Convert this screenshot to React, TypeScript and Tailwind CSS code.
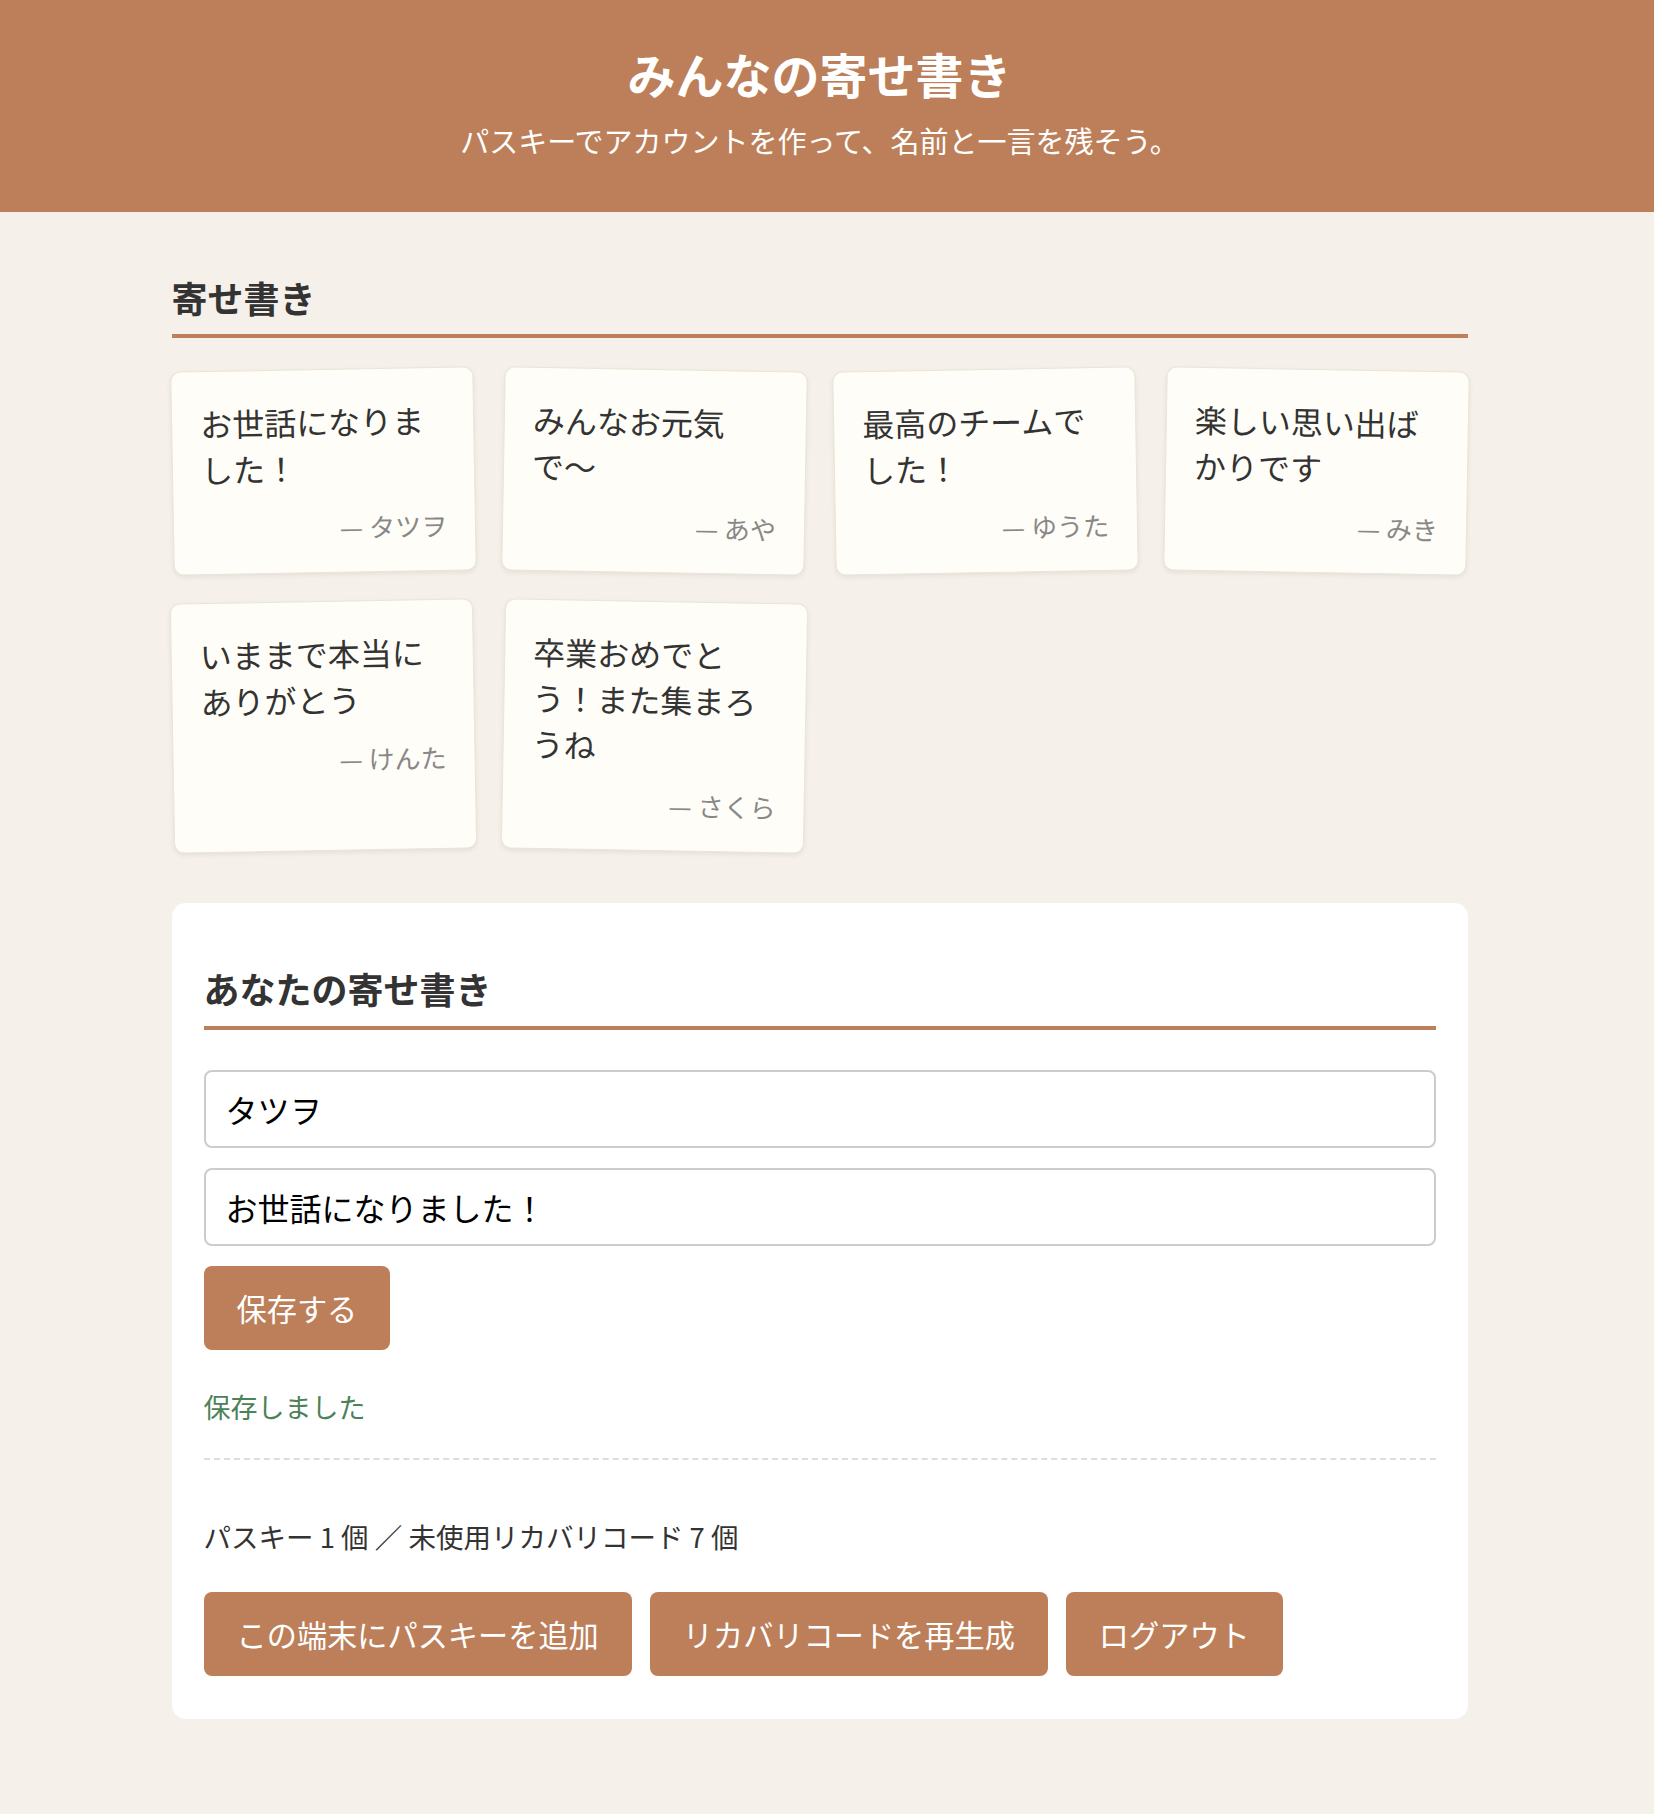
import React from 'react'

const notes = [
  { text: 'お世話になりました！', name: 'タツヲ' },
  { text: 'みんなお元気で〜', name: 'あや' },
  { text: '最高のチームでした！', name: 'ゆうた' },
  { text: '楽しい思い出ばかりです', name: 'みき' },
  { text: 'いままで本当にありがとう', name: 'けんた' },
  { text: '卒業おめでとう！また集まろうね', name: 'さくら' },
]

const btn =
  'h-[84px] rounded-[8px] bg-[#bc7f5a] px-[33px] text-[30.2px] leading-[44px] text-white'

function NoteCard({ text, name, i }: { text: string; name: string; i: number }) {
  return (
    <div
      className={
        'rounded-[10px] border border-[#ebe5d6] bg-[#fffdf7] p-[28px] shadow-[0_2px_5px_rgba(0,0,0,0.07)] ' +
        (i % 2 === 0 ? '-rotate-1' : 'rotate-1')
      }
    >
      <p className="text-[32px] leading-[46px] text-[#333]">{text}</p>
      <p className="mt-[20px] text-right text-[26px] leading-[34px] text-[#888]">— {name}</p>
    </div>
  )
}

export default function App() {
  return (
    <div className="min-h-screen bg-[#f5f0ea] pb-[96px] font-['Noto_Sans_CJK_JP',sans-serif] text-[#333]">
      <header className="bg-[#bc7f5a] pt-[40px] pr-[15px] pb-[49px] text-center text-white">
        <h1 className="text-[48px] font-bold leading-[66px]">みんなの寄せ書き</h1>
        <p className="mt-[12px] text-[29px] leading-[45px]">
          パスキーでアカウントを作って、名前と一言を残そう。
        </p>
      </header>

      <div className="pr-[15px]">
        <main className="mx-auto w-[1296px]">
          <section className="pt-[61px]">
            <h2 className="border-b-4 border-[#bc7f5a] pb-[12px] text-[36px] font-bold leading-[49px] text-[#333]">
              寄せ書き
            </h2>
            <div className="mt-[31px] grid grid-cols-4 gap-[28px]">
              {notes.map((n, i) => (
                <NoteCard key={n.name} text={n.text} name={n.name} i={i} />
              ))}
            </div>
          </section>

          <section className="mt-[52px] rounded-[14px] bg-white px-[32px] pt-[60px] pb-[43px]">
            <h2 className="border-b-4 border-[#bc7f5a] pb-[13px] text-[36px] font-bold leading-[50px] text-[#333]">
              あなたの寄せ書き
            </h2>
            <form className="mt-[40px] flex flex-col" onSubmit={(e) => e.preventDefault()}>
              <input
                type="text"
                defaultValue="タツヲ"
                className="h-[78px] w-full rounded-[8px] border-2 border-[#cccccc] bg-white px-[20px] text-[32px] text-black outline-none"
              />
              <input
                type="text"
                defaultValue="お世話になりました！"
                className="mt-[20px] h-[78px] w-full rounded-[8px] border-2 border-[#cccccc] bg-white px-[20px] text-[32px] text-black outline-none"
              />
              <div className="mt-[20px]">
                <button type="submit" className={btn}>
                  保存する
                </button>
              </div>
            </form>
            <p className="mt-[37px] text-[27px] leading-[40px] text-[#4b8258]">保存しました</p>

            <div className="mt-[31px] border-t-2 border-dashed border-[#dddddd] pt-[56px]">
              <p className="text-[27.5px] leading-[40px] text-[#333]">
                パスキー 1 個 ／ 未使用リカバリコード 7 個
              </p>
              <div className="mt-[36px] flex gap-[18px]">
                <button className={btn}>この端末にパスキーを追加</button>
                <button className={btn}>リカバリコードを再生成</button>
                <button className={btn}>ログアウト</button>
              </div>
            </div>
          </section>
        </main>
      </div>
    </div>
  )
}
